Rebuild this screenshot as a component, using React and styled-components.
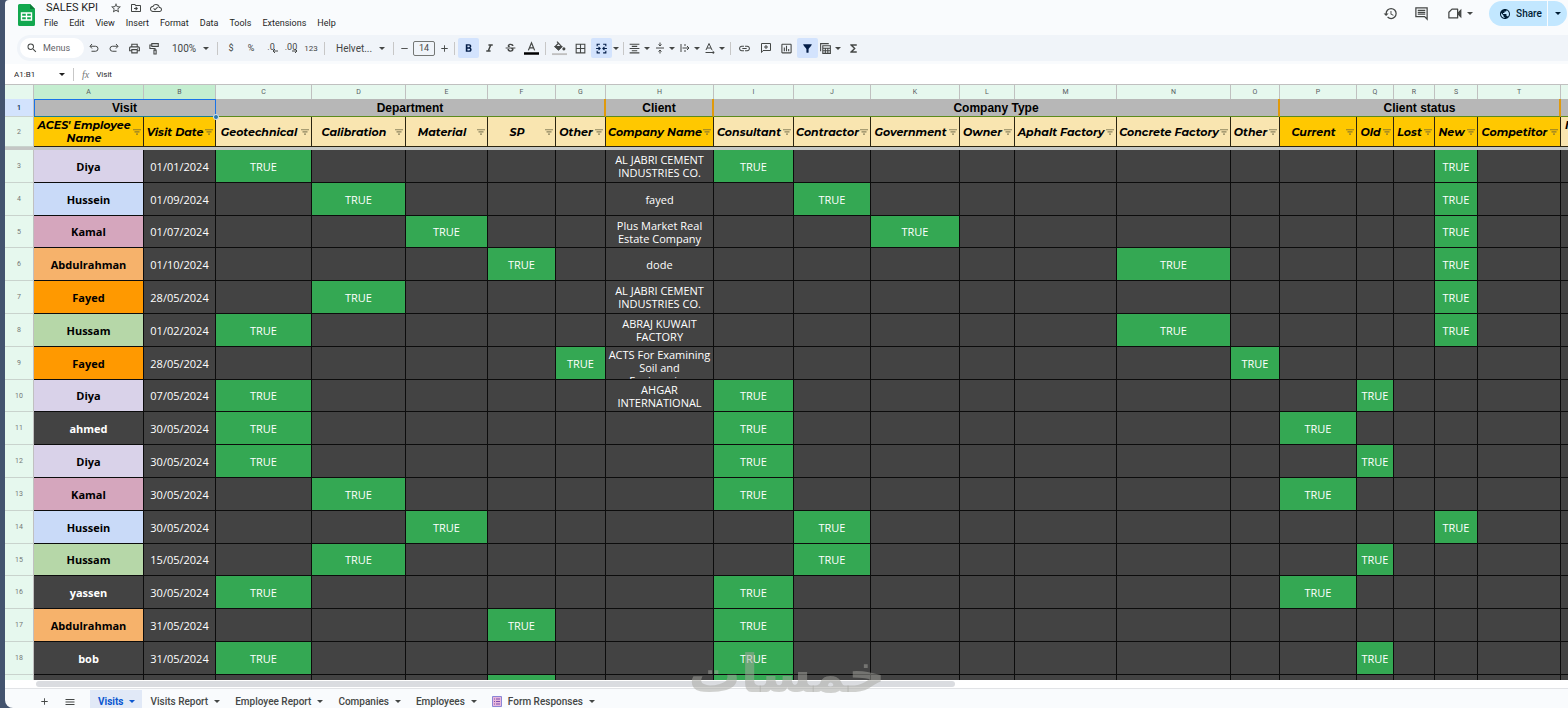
import React, { useState } from 'react';
import styled, { createGlobalStyle, css } from 'styled-components';
import {
  MdStarBorder,
  MdOutlineDriveFileMove,
  MdOutlineCloudDone,
  MdSearch,
  MdOutlinePrint,
  MdFormatBold,
  MdFormatItalic,
  MdStrikethroughS,
  MdBorderAll,
  MdFormatAlignCenter,
  MdLink,
  MdInsertChartOutlined,
  MdFilterAlt,
  MdFunctions,
  MdHistory,
  MdPublic,
  MdAdd,
  MdMenu,
  MdRemove,
} from 'react-icons/md';

const GlobalStyle = createGlobalStyle`
  * {
    box-sizing: border-box;
  }

  body {
    margin: 0;
    background: #44546f;
    font-family: Roboto, "Liberation Sans", sans-serif;
    color: #444746;
  }

  button, input, select {
    font: inherit;
    color: inherit;
    margin: 0;
    padding: 0;
    border: 0;
    background: none;
  }
`

const Page = styled.div`
  position: relative;
  display: flex;
  flex-direction: column;
  height: 100vh;
  margin-left: 5px;
  overflow: hidden;
  background: #f9fbfd;
  border-radius: 4px 0 0 8px;
`

/* ---------- top bar ---------- */

const TopBar = styled.header`
  display: flex;
  align-items: flex-start;
  height: 35px;
  padding-left: 13px;
`

const Logo = styled.svg`
  width: 17px;
  height: 22px;
  margin-top: 4px;
`

const TitleBlock = styled.div`
  flex: 1;
  margin-left: 9px;
`

const TitleRow = styled.div`
  display: flex;
  align-items: center;
  height: 16px;
  padding-left: 2px;
  gap: 8px;

  svg {
    display: block;
    width: 12px;
    height: 12px;
  }
`

const Title = styled.h1`
  margin: 0 4px 0 0;
  font-size: 11px;
  font-weight: 400;
  line-height: 16px;
  color: #1f1f1f;
`

const Menu = styled.nav`
  display: flex;
  gap: 11px;
  height: 14px;

  button {
    font-size: 9px;
    line-height: 14px;
    color: #1f1f1f;
  }
`

const Actions = styled.div`
  display: flex;
  align-items: center;
  height: 26px;
  gap: 16px;

  > button svg {
    display: block;
    width: 15px;
    height: 15px;
  }
`

const MeetButton = styled.button`
  display: flex;
  align-items: center;
  gap: 5px;
  padding-left: 2px;

  && svg + svg {
    width: 6px;
    height: 3px;
  }
`

const Share = styled.div`
  display: flex;
  height: 25px;
  margin-top: 1px;
  margin-right: 1px;
  color: #001d35;

  button {
    display: flex;
    align-items: center;
    justify-content: center;
    background: #c2e7ff;
  }

  button:first-child {
    gap: 5px;
    width: 58px;
    padding-left: 5px;
    border-radius: 13px 0 0 13px;
    font-size: 10px;
    font-weight: 500;
  }

  button:last-child {
    width: 19px;
    margin-left: 1px;
    border-radius: 0 13px 13px 0;
  }
`

/* ---------- toolbar ---------- */

const Toolbar = styled.div`
  display: flex;
  align-items: center;
  height: 26px;
  margin-left: 12px;
  padding-left: 3px;
  background: #f0f4f9;
  border-radius: 13px 0 0 13px;
`

const SearchPill = styled.label`
  display: flex;
  align-items: center;
  gap: 5px;
  width: 64px;
  height: 20px;
  padding-left: 6px;
  background: #fff;
  border-radius: 10px;

  input {
    width: 40px;
    font-size: 9px;
    outline: 0;
  }

  input::placeholder {
    color: #5f6368;
    opacity: 1;
  }
`

const Tool = styled.button`
  display: flex;
  align-items: center;
  justify-content: center;
  width: ${(props) => props.$w || 21}px;
  height: 20px;
  border-radius: 2px;
  font-size: ${(props) => (props.$small ? 8 : 9)}px;

  ${(props) => props.$active && css`
    background: #d3e3fd;
    color: #041e49;
  `}

  svg {
    display: block;
    flex: none;
  }
`

const DecimalTool = styled(Tool)`
  flex-direction: column;
  line-height: 8px;

  svg {
    margin-top: -2px;
    margin-left: 8px;
  }
`

const Divider = styled.span`
  width: 1px;
  height: 13px;
  margin: 0 3px;
  background: #c7c7c7;
`

const SelectBox = styled.label`
  display: flex;
  align-items: center;
  width: ${(props) => props.$w}px;
  padding: 0 5px 0 8px;

  select {
    flex: 1;
    min-width: 0;
    appearance: none;
    font-size: 10px;
    outline: 0;
  }
`

const SizeInput = styled.input`
  && {
    width: 22px;
    height: 15px;
    margin: 0 2px;
    border: 1px solid #747775;
    border-radius: 2px;
    font-size: 9px;
    text-align: center;
  }
`

const FormulaBar = styled.div`
  display: flex;
  align-items: center;
  height: 24px;
  padding-left: 9px;
  background: #fff;
  border-top: 3px solid #f9fbfd;
  border-bottom: 1px solid #c0c0c0;
  font-size: 8px;
  color: #1f1f1f;

  input {
    outline: 0;
  }

  input:first-child {
    width: 45px;
  }

  input:last-child {
    flex: 1;
  }

  ${Divider} {
    margin: 0 8px;
  }
`

const Fx = styled.em`
  margin-right: 7px;
  font-family: "Liberation Serif", serif;
  font-size: 10px;
  color: #747775;
`

/* ---------- grid ---------- */

const GridArea = styled.main`
  position: relative;
  flex: 1;
  min-height: 0;
  overflow: hidden;
`

const Sheet = styled.table`
  width: 100%;
  table-layout: fixed;
  border-collapse: separate;
  border-spacing: 0;

  td, th {
    padding: 0;
  }
`

const ColumnHead = styled.th`
  height: 14px;
  background: ${(props) => (props.$selected ? '#c4eed0' : '#e6f8ee')};
  border-right: 1px solid #c0c0c0;
  font-size: 7px;
  font-weight: 400;
  line-height: 13px;
  color: #575b5f;
`

const RowHead = styled.th`
  background: ${(props) => (props.$selected ? '#d3e3fd' : '#e6f8ee')};
  border-right: 1px solid #c0c0c0;
  border-bottom: 1px solid #c9d3cd;
  font-size: 7px;
  font-weight: ${(props) => (props.$selected ? 500 : 400)};
  color: ${(props) => (props.$selected ? '#041e49' : '#747775')};
`

const GroupCell = styled.th`
  position: relative;
  height: 18px;
  background: #b7b7b7;
  border-right: ${(props) => (props.$selected ? '1px solid #1a73e8' : '2px solid #e09a0c')};
  border-bottom: 1px solid #5c8a1c;
  font-family: "Liberation Sans", Arial, sans-serif;
  font-size: 12px;
  font-weight: 700;
  line-height: 16px;
  color: #000;

  && {
    padding-top: 1px;
  }

  ${(props) => props.$selected && css`
    border-bottom-color: #1b7f8c;
    box-shadow: inset 0 1px 0 #1a73e8, inset 1px 0 0 #1a73e8;
  `}
`

const FillHandle = styled.span`
  position: absolute;
  right: -4px;
  bottom: -4px;
  z-index: 1;
  width: 6px;
  height: 6px;
  border: 1px solid #d8e6f5;
  border-radius: 50%;
  background: #2a76a8;
`

const FieldCell = styled.th`
  height: 30px;
  background: ${(props) => (props.$strong ? '#ffc800' : '#f9e5b0')};
  border-right: 1px solid #2b2410;
  border-bottom: 1px solid #2b2410;

  div {
    display: flex;
    align-items: center;
    padding: 1px 2px 0 1px;
  }

  span {
    flex: 1;
    font-family: Montserrat, Inter, sans-serif;
    font-size: 11px;
    font-style: italic;
    font-weight: 700;
    line-height: 13px;
    color: #000;
    white-space: pre;
  }

  svg {
    flex: none;
    width: 8px;
    height: 6px;
  }
`

const FreezeBar = styled.td`
  height: 3px;
  background: #c4c7c5;
`

const DataRow = styled.tr`
  height: 33px;

  &:nth-child(5n + 3) {
    height: 32px;
  }
`

const Cell = styled.td`
  background: ${(props) => props.$bg || '#434343'};
  border-right: 1px solid #0c0c0c;
  border-bottom: 1px solid #0c0c0c;
  font-family: "Open Sans", sans-serif;
  font-size: 11px;
  font-weight: ${(props) => (props.$bold ? 700 : 400)};
  line-height: 13px;
  text-align: center;
  color: ${(props) => (props.$dark ? '#000' : '#fff')};

  div {
    display: flex;
    align-items: safe center;
    justify-content: center;
    height: 31px;
    padding: 0 1px;
    overflow: hidden;
    white-space: pre-line;
  }
`

const Watermark = styled.div`
  position: absolute;
  left: calc(50% - 98px);
  bottom: 8px;
  z-index: 2;
  font-family: "DejaVu Sans", sans-serif;
  font-size: 52px;
  font-weight: 700;
  line-height: 52px;
  color: rgba(165, 165, 160, 0.5);
  pointer-events: none;
`

const ScrollTrack = styled.div`
  display: flex;
  align-items: center;
  height: 9px;
  padding-left: 31px;
  background: #fff;
  border-bottom: 1px solid #e1e3e6;

  span {
    width: 60%;
    height: 6px;
    border-radius: 3px;
    background: #dadce0;
  }
`

/* ---------- sheet tabs ---------- */

const TabBar = styled.footer`
  display: flex;
  height: 19px;
  padding-top: 1px;
  padding-left: 26px;
`

const BarButton = styled.button`
  display: flex;
  align-items: center;
  justify-content: center;
  width: 26px;
  padding-top: 5px;
`

const Tab = styled.button`
  display: flex;
  align-items: center;
  gap: 6px;
  padding: 5px 7px 0 8px;
  font-size: 10px;
  font-weight: 500;
  white-space: nowrap;

  ${(props) => props.$active && css`
    background: #e1e9f7;
    color: #0b57d0;
    font-weight: 700;
  `}
`

const Tabs = styled.div`
  display: flex;
  margin-left: 7px;
`

const Caret = () => (
  <svg width="6" height="3" viewBox="0 0 6 3" aria-hidden="true">
    <path d="M0 0h6L3 3z" fill="currentColor" />
  </svg>
);

const Glyph = ({ size = 13, children }) => (
  <svg width={size} height={size} viewBox="0 0 24 24" fill="none" stroke="currentColor" strokeWidth="2" aria-hidden="true">
    {children}
  </svg>
);

const SmallArrow = ({ d }) => (
  <svg width="6" height="4" viewBox="0 0 6 4" fill="none" stroke="currentColor" aria-hidden="true">
    <path d={d} />
  </svg>
);

const FilterMark = () => (
  <svg viewBox="0 0 8 6" aria-hidden="true">
    <path d="M0 .7h8M1.5 2.9h5M3 5.1h2" stroke="#5d5a3c" strokeOpacity="0.7" strokeWidth="1.1" />
  </svg>
);

const menus = ['File', 'Edit', 'View', 'Insert', 'Format', 'Data', 'Tools', 'Extensions', 'Help'];

const columns = [
  { id: 'A', width: 110, label: "ACES' Employee\nName", strong: true },
  { id: 'B', width: 72, label: 'Visit Date', strong: true },
  { id: 'C', width: 96, label: 'Geotechnical' },
  { id: 'D', width: 94, label: 'Calibration' },
  { id: 'E', width: 82, label: 'Material' },
  { id: 'F', width: 68, label: 'SP' },
  { id: 'G', width: 50, label: 'Other' },
  { id: 'H', width: 108, label: 'Company Name', strong: true },
  { id: 'I', width: 80, label: 'Consultant' },
  { id: 'J', width: 77, label: 'Contractor' },
  { id: 'K', width: 89, label: 'Government' },
  { id: 'L', width: 55, label: 'Owner' },
  { id: 'M', width: 102, label: 'Aphalt Factory' },
  { id: 'N', width: 114, label: 'Concrete Factory' },
  { id: 'O', width: 49, label: 'Other' },
  { id: 'P', width: 77, label: 'Current', strong: true },
  { id: 'Q', width: 37, label: 'Old', strong: true },
  { id: 'R', width: 41, label: 'Lost', strong: true },
  { id: 'S', width: 43, label: 'New', strong: true },
  { id: 'T', width: 83, label: 'Competitor', strong: true },
];

const groups = [
  { label: 'Visit', span: 2, selected: true },
  { label: 'Department', span: 5 },
  { label: 'Client', span: 1 },
  { label: 'Company Type', span: 7 },
  { label: 'Client status', span: 5 },
];

const nameColors = {
  Diya: '#d9d2e9',
  Hussein: '#c9daf8',
  Kamal: '#d5a6bd',
  Abdulrahman: '#f6b26b',
  Fayed: '#ff9900',
  Hussam: '#b6d7a8',
};

// name, date, columns that are TRUE, client
const visits = [
  ['Diya', '01/01/2024', 'CIS', 'AL JABRI CEMENT INDUSTRIES CO.'],
  ['Hussein', '01/09/2024', 'DJS', 'fayed'],
  ['Kamal', '01/07/2024', 'EKS', 'Plus Market Real Estate Company'],
  ['Abdulrahman', '01/10/2024', 'FNS', 'dode'],
  ['Fayed', '28/05/2024', 'DS', 'AL JABRI CEMENT INDUSTRIES CO.'],
  ['Hussam', '01/02/2024', 'CNS', 'ABRAJ KUWAIT FACTORY'],
  ['Fayed', '28/05/2024', 'GO', 'ACTS For Examining\nSoil and\nEngineering'],
  ['Diya', '07/05/2024', 'CIQ', 'AHGAR INTERNATIONAL'],
  ['ahmed', '30/05/2024', 'CIP', ''],
  ['Diya', '30/05/2024', 'CIQ', ''],
  ['Kamal', '30/05/2024', 'DIP', ''],
  ['Hussein', '30/05/2024', 'EJS', ''],
  ['Hussam', '15/05/2024', 'DJQ', ''],
  ['yassen', '30/05/2024', 'CIP', ''],
  ['Abdulrahman', '31/05/2024', 'FI', ''],
  ['bob', '31/05/2024', 'CIQ', ''],
];

const VisitRow = ({ number, visit }) => {
  const [name, date, flags, client] = visit;

  return (
    <DataRow>
      <RowHead scope="row">{number}</RowHead>
      <Cell $bold $bg={nameColors[name]} $dark={name in nameColors}>{name}</Cell>
      <Cell>{date}</Cell>
      {columns.slice(2).map(({ id }) => {
        if (id === 'H') return <Cell key={id}><div>{client}</div></Cell>;
        const checked = flags.includes(id);
        return (
          <Cell key={id} $bg={checked ? '#34a853' : undefined}>
            {checked && number ? 'TRUE' : null}
          </Cell>
        );
      })}
      <Cell />
    </DataRow>
  );
};

const SheetGrid = () => (
  <GridArea>
    <Sheet>
      <colgroup>
        <col width="29" />
        {columns.map((col) => <col key={col.id} width={col.width} />)}
        <col width="100" />
      </colgroup>
      <thead>
        <tr>
          <ColumnHead />
          {columns.map((col, i) => <ColumnHead key={col.id} $selected={i < 2}>{col.id}</ColumnHead>)}
          <ColumnHead />
        </tr>
        <tr>
          <RowHead $selected>1</RowHead>
          {groups.map((group) => (
            <GroupCell key={group.label} colSpan={group.span} $selected={group.selected}>
              {group.label}
              {group.selected && <FillHandle />}
            </GroupCell>
          ))}
          <GroupCell />
        </tr>
        <tr>
          <RowHead>2</RowHead>
          {columns.map((col) => (
            <FieldCell key={col.id} $strong={col.strong}>
              <div><span>{col.label}</span><FilterMark /></div>
            </FieldCell>
          ))}
          <FieldCell><div><span style={{ textAlign: 'left' }}>{' N\n '}</span></div></FieldCell>
        </tr>
        <tr><FreezeBar colSpan={columns.length + 2} /></tr>
      </thead>
      <tbody>
        {visits.map((visit, i) => <VisitRow key={i} number={i + 3} visit={visit} />)}
        <VisitRow number="" visit={['', '', 'FI', '']} />
      </tbody>
    </Sheet>
  </GridArea>
);

const MainToolbar = () => (
  <Toolbar>
    <SearchPill>
      <MdSearch size={12} />
      <input placeholder="Menus" aria-label="Menus" />
    </SearchPill>
    <Tool $w={20} aria-label="Undo">
      <Glyph size={12}><path d="M8 4 4 8.500l4 4.500M4.500 8.500H15a5 5 0 0 1 0 10H7" /></Glyph>
    </Tool>
    <Tool $w={20} aria-label="Redo">
      <Glyph size={12}><path d="m16 4 4 4.500-4 4.500M19.500 8.500H9a5 5 0 0 0 0 10h8" /></Glyph>
    </Tool>
    <Tool $w={20} aria-label="Print"><MdOutlinePrint size={13} /></Tool>
    <Tool $w={20} aria-label="Paint format">
      <Glyph><path d="M7 3h12v5H7zM7 5.500H3.500V12H13v3M11 15h4v7h-4z" /></Glyph>
    </Tool>
    <SelectBox $w={50}>
      <select aria-label="Zoom"><option>100%</option></select>
      <Caret />
    </SelectBox>
    <Divider />
    <Tool $w={20} aria-label="Currency">$</Tool>
    <Tool $w={20} aria-label="Percent">%</Tool>
    <DecimalTool $w={20} aria-label="Decrease decimals">
      .0<SmallArrow d="M6 2H1M3 0 1 2l2 2" />
    </DecimalTool>
    <DecimalTool $w={20} aria-label="Increase decimals">
      .00<SmallArrow d="M0 2h5M3 0l2 2-2 2" />
    </DecimalTool>
    <Tool $w={20} $small aria-label="More formats">123</Tool>
    <Divider />
    <SelectBox $w={62}>
      <select aria-label="Font"><option>Helvet...</option></select>
      <Caret />
    </SelectBox>
    <Divider />
    <Tool $w={14} aria-label="Decrease font size"><MdRemove size={11} /></Tool>
    <SizeInput defaultValue="14" aria-label="Font size" />
    <Tool $w={14} aria-label="Increase font size"><MdAdd size={11} /></Tool>
    <Divider />
    <Tool $active aria-label="Bold"><MdFormatBold size={13} /></Tool>
    <Tool aria-label="Italic"><MdFormatItalic size={13} /></Tool>
    <Tool aria-label="Strikethrough"><MdStrikethroughS size={13} /></Tool>
    <Tool aria-label="Text color">
      <Glyph size={15}>
        <path d="M7 15 12 3l5 12M9 11h6" />
        <path d="M0 20h24" stroke="#000" strokeWidth="4" />
      </Glyph>
    </Tool>
    <Divider />
    <Tool aria-label="Fill color">
      <Glyph size={15}>
        <path d="m8 1 7.500 8-5 5L5 9l5-5" />
        <path d="M5.500 9h9.500l-4.500 5z" fill="currentColor" />
        <circle cx="19" cy="12.500" r="1.500" fill="currentColor" />
        <path d="M0 21h24" stroke="#c0c0c0" strokeWidth="3" />
      </Glyph>
    </Tool>
    <Tool aria-label="Borders"><MdBorderAll size={13} /></Tool>
    <Tool $active aria-label="Merge cells">
      <Glyph><path d="M9 4H4v4M15 4h5v4M9 20H4v-4M15 20h5v-4M2 12h7M6.500 9l3 3-3 3M22 12h-7M17.500 9l-3 3 3 3" /></Glyph>
    </Tool>
    <Tool $w={8} aria-label="Merge type"><Caret /></Tool>
    <Divider />
    <Tool $w={15} aria-label="Horizontal align"><MdFormatAlignCenter size={13} /></Tool>
    <Tool $w={10} aria-label="Horizontal align options"><Caret /></Tool>
    <Tool $w={15} aria-label="Vertical align">
      <Glyph size={12}><path d="M4 12h16M12 1v7M9 5l3 3 3-3M12 23v-7M9 19l3-3 3 3" /></Glyph>
    </Tool>
    <Tool $w={10} aria-label="Vertical align options"><Caret /></Tool>
    <Tool $w={15} aria-label="Text wrapping">
      <Glyph size={12}><path d="M4 4v16M12 4v4M12 16v4M7 12h13M16 8l4 4-4 4" /></Glyph>
    </Tool>
    <Tool $w={10} aria-label="Wrapping options"><Caret /></Tool>
    <Tool $w={15} aria-label="Text rotation">
      <Glyph size={12}><path d="M4 16 10 3l6 13M6 12h8M3 21h17M17 18l3.500 3-3.500 3" /></Glyph>
    </Tool>
    <Tool $w={10} aria-label="Rotation options"><Caret /></Tool>
    <Divider />
    <Tool aria-label="Insert link"><MdLink size={13} /></Tool>
    <Tool aria-label="Insert comment">
      <Glyph size={12}><path d="M3 21V3h18v14H6zM12 6v8M8 10h8" /></Glyph>
    </Tool>
    <Tool aria-label="Insert chart"><MdInsertChartOutlined size={13} /></Tool>
    <Tool $active aria-label="Remove filter"><MdFilterAlt size={13} /></Tool>
    <Tool $w={15} aria-label="Filter views">
      <Glyph><path d="M18 3H3v14M7 7h14v14H7zM7 11.500h14M7 16h14M11.700 11v10M16.300 11v10" /></Glyph>
    </Tool>
    <Tool $w={10} aria-label="Filter view options"><Caret /></Tool>
    <Tool aria-label="Functions"><MdFunctions size={13} /></Tool>
  </Toolbar>
);

const tabs = ['Visits', 'Visits Report', 'Employee Report', 'Companies', 'Employees', 'Form Responses'];

const App = () => {
  const [activeTab, setActiveTab] = useState('Visits');

  return (
    <>
      <GlobalStyle />
      <Page>
        <TopBar>
          <Logo viewBox="0 0 17 22">
            <path d="M1.500 0H12l5 5v15.500a1.500 1.500 0 0 1-1.500 1.500h-14A1.500 1.500 0 0 1 0 20.500v-19A1.500 1.500 0 0 1 1.500 0z" fill="#12a84f" />
            <path d="M12 0l5 5h-5z" fill="#0b7d38" />
            <path d="M3.500 9h10v7h-10zM8.500 9v7M3.500 12.500h10" fill="none" stroke="#fff" strokeWidth="1.400" />
          </Logo>
          <TitleBlock>
            <TitleRow>
              <Title>SALES KPI</Title>
              <MdStarBorder />
              <MdOutlineDriveFileMove />
              <MdOutlineCloudDone />
            </TitleRow>
            <Menu>
              {menus.map((menu) => <button key={menu}>{menu}</button>)}
            </Menu>
          </TitleBlock>
          <Actions>
            <button aria-label="History"><MdHistory /></button>
            <button aria-label="Comments">
              <Glyph><path d="M3 3h18v18l-4-4H3zM6 7h12M6 10h12M6 13h12" /></Glyph>
            </button>
            <MeetButton aria-label="Meet">
              <Glyph>
                <path d="M8 5h9v14H3v-9z" strokeLinejoin="round" />
                <path d="m18 11 4-4v10l-4-4z" fill="currentColor" />
              </Glyph>
              <Caret />
            </MeetButton>
            <Share>
              <button><MdPublic size={12} />Share</button>
              <button aria-label="Share options"><Caret /></button>
            </Share>
          </Actions>
        </TopBar>

        <MainToolbar />

        <FormulaBar>
          <input defaultValue="A1:B1" aria-label="Name box" />
          <Caret />
          <Divider />
          <Fx>fx</Fx>
          <input defaultValue="Visit" aria-label="Formula" />
        </FormulaBar>

        <SheetGrid />

        <ScrollTrack><span /></ScrollTrack>

        <TabBar>
          <BarButton aria-label="Add sheet"><MdAdd size={11} /></BarButton>
          <BarButton aria-label="All sheets"><MdMenu size={12} /></BarButton>
          <Tabs>
            {tabs.map((tab) => (
              <Tab key={tab} $active={tab === activeTab} onClick={() => setActiveTab(tab)}>
                {tab === 'Form Responses' && (
                  <svg width="10" height="11" viewBox="0 0 10 11" aria-hidden="true">
                    <path d="M.5.5h9v10h-9z" fill="#e9b8dc" stroke="#8b86d6" />
                    <path d="M2 3h1M4 3h4M2 5.500h1M4 5.500h4M2 8h1M4 8h4" stroke="#7b4fb0" />
                  </svg>
                )}
                {tab}
                <Caret />
              </Tab>
            ))}
          </Tabs>
        </TabBar>
        <Watermark lang="ar">خمسات</Watermark>
      </Page>
    </>
  );
}

export default App;
